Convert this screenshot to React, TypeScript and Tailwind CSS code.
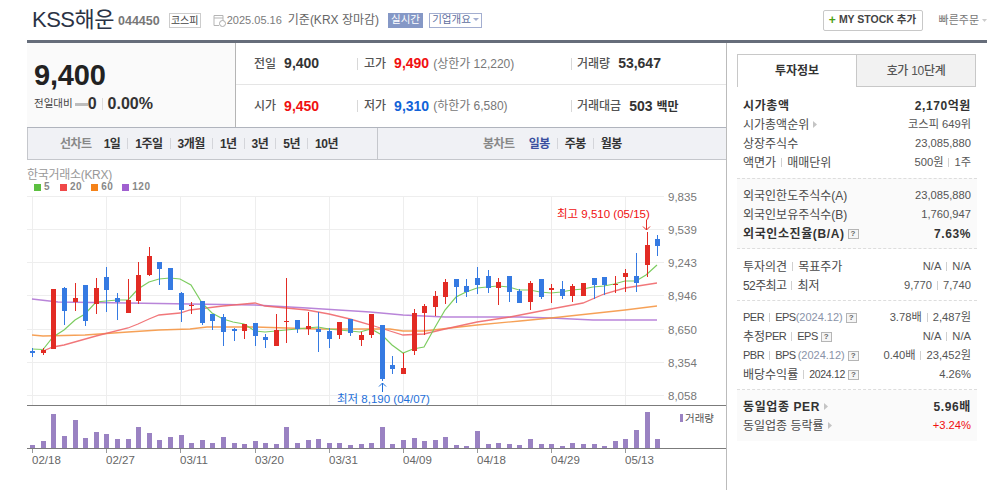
const candles: [string, number, number, number, number][] = [
  ['b', 348, 351, 353, 357], ['r', 348, 350, 353, 355], ['r', 289, 289, 349, 349], ['b', 287, 288, 311, 325],
  ['r', 283, 298, 302, 311], ['b', 285, 285, 321, 326], ['r', 278, 288, 304, 314], ['b', 267, 277, 290, 312],
  ['b', 293, 298, 302, 320], ['r', 279, 300, 313, 313], ['r', 262, 275, 301, 304], ['r', 247, 256, 275, 276],
  ['b', 262, 262, 269, 285], ['b', 268, 268, 290, 290], ['b', 292, 293, 310, 322], ['r', 302, 305, 306, 314],
  ['b', 301, 301, 323, 325], ['b', 314, 314, 321, 330], ['b', 314, 317, 332, 346], ['b', 328, 329, 331, 341],
  ['r', 324, 324, 331, 339], ['b', 323, 323, 336, 346], ['b', 334, 337, 340, 348], ['r', 314, 330, 346, 346],
  ['r', 278, 321, 322, 343], ['b', 320, 320, 329, 333], ['r', 312, 326, 329, 335], ['b', 312, 329, 332, 352],
  ['b', 328, 331, 339, 348], ['r', 322, 322, 335, 339], ['b', 319, 319, 333, 336], ['r', 332, 335, 340, 346],
  ['r', 314, 314, 335, 338], ['b', 325, 325, 379, 381], ['b', 356, 365, 369, 374], ['r', 353, 368, 374, 374],
  ['r', 309, 313, 351, 355], ['r', 304, 306, 313, 335], ['r', 291, 296, 307, 316], ['r', 279, 282, 297, 304],
  ['b', 279, 279, 287, 303], ['b', 279, 286, 292, 297], ['b', 267, 278, 285, 294], ['b', 270, 276, 288, 293],
  ['r', 278, 282, 288, 305], ['b', 276, 276, 292, 302], ['b', 289, 291, 303, 303], ['r', 281, 283, 302, 310],
  ['b', 279, 279, 297, 299], ['r', 284, 288, 290, 303], ['b', 281, 289, 296, 299], ['r', 284, 286, 296, 302],
  ['r', 283, 283, 296, 296], ['b', 278, 278, 285, 299], ['b', 277, 277, 285, 295], ['r', 276, 284, 285, 293],
  ['r', 269, 273, 277, 292], ['b', 253, 276, 283, 292], ['r', 232, 245, 265, 277], ['b', 235, 239, 246, 256],
];

// bar tops, read off the volume pane
const volumes = [
  445, 441, 414, 436, 420, 438, 432, 434, 439, 439, 427, 433, 440, 437, 435, 443, 440, 443, 437, 443,
  444, 441, 443, 444, 427, 443, 440, 439, 443, 443, 445, 444, 443, 427, 444, 440, 438, 441, 440, 437,
  445, 446, 431, 444, 443, 444, 445, 439, 444, 444, 446, 443, 444, 444, 446, 441, 439, 430, 412, 439,
];

const ma5 = '32,349 43,349.5 53,337 64,330 75,320 85,314 96,302 106,301 117,300 128,300 138,289 149,282 159,279 170,278 180,279 191,285 202,303 212,313 223,319 233,322 244,324 255,331 265,332 276,331 286,330 297,329 307,328 318,327 329,329 339,330 350,331 360,332 371,329 382,335 392,345 403,353 413,349 424,347 434,329 445,310 456,297 466,292 477,288 487,287 498,286 509,287 519,290 530,290 540,292 551,293 561,292 572,290 583,289 593,287 604,286 614,284 625,281 636,281 646,275 657,265';
const ma20 = '43,351 53,347 64,345 96,336 128,328 138,324 149,319 159,315 180,313 190,310 223,306 255,303 265,306 286,308 307,310 329,314 350,319 371,325 390,331 403,335 424,334 445,329 477,322 510,317 551,309 583,303 604,294 625,288 657,283';
const ma60 = '32,335 43,336 85,335 128,332 159,330 190,329 207,327 255,327 318,329 390,329 403,331 424,331 477,325 520,321 551,318 625,310 657,306';
const ma120 = '32,299 58,302 128,303 190,304 255,305 307,308 370,312 403,315 445,317 520,317 551,318 593,320 657,320';

const gridY = [
  [196.5, '9,835'], [229.5, '9,539'], [262.5, '9,243'], [295.5, '8,946'],
  [329.5, '8,650'], [362.5, '8,354'], [395.5, '8,058'],
] as const;
const ticks = [
  [32.5, '02/18'], [106.5, '02/27'], [180.5, '03/11'], [255.5, '03/20'], [329.5, '03/31'],
  [403.5, '04/09'], [477.5, '04/18'], [551.5, '04/29'], [625.5, '05/13'],
] as const;

function Caret() {
  return (
    <svg width="5" height="7" viewBox="0 0 5 7" className="ml-[4px] shrink-0">
      <path d="M0 0 L4 3.5 L0 7 Z" fill="#c4c4c4" />
    </svg>
  );
}

function Help() {
  return (
    <span className="ml-[3px] flex h-[10px] w-[11px] shrink-0 items-center justify-center border border-[#b5b5b5] bg-[#f5f5f5] text-[8px] leading-none font-bold tracking-normal text-[#666]">
      ?
    </span>
  );
}

function Sep() {
  return <span className="mx-[5px] h-[9px] w-px shrink-0 bg-[#d0d0d0]" />;
}

function Latin({ children }: { children: React.ReactNode }) {
  return <span className="text-[11px] tracking-[-0.5px]">{children}</span>;
}

function Row({ label, value, bold }: { label: React.ReactNode; value: React.ReactNode; bold?: boolean }) {
  return (
    <div className={`flex h-[19px] items-center justify-between ${bold ? 'font-bold tracking-[0.6px] text-[#333]' : 'text-[#4a4a4a]'}`}>
      <div className="flex items-center text-[12px] whitespace-nowrap">{label}</div>
      <div className={`flex items-center whitespace-nowrap ${bold ? 'text-[12px]' : 'text-[11.2px] text-[#555]'}`}>{value}</div>
    </div>
  );
}

function Stat({ label, value, color, extra, w }: { label: string; value: React.ReactNode; color: string; extra?: string; w: string }) {
  return (
    <div className={`flex items-center whitespace-nowrap ${w}`}>
      <span className="text-[12px] font-medium text-[#555]">{label}</span>
      <span className={`ml-[8px] text-[14px] font-bold ${color}`}>{value}</span>
      {extra && <span className="ml-[4px] text-[12px] text-[#777]">{extra}</span>}
    </div>
  );
}

function ToolItem({ text, last, active }: { text: string; last?: boolean; active?: boolean }) {
  return (
    <>
      <span className={`text-[12px] font-bold tracking-[-0.5px] ${active ? 'text-[#3a4f9f]' : 'text-[#333]'}`}>{text}</span>
      {!last && <span className="mx-[7px] h-[11px] w-px bg-[#d4d5da]" />}
    </>
  );
}

function Chart() {
  return (
    <svg width="699" height="298" viewBox="27 192 699 298" className="block" fontFamily="'Liberation Sans', 'Noto Sans CJK KR', sans-serif">
      {gridY.map(([y, t]) => (
        <g key={t}>
          <line x1="27" x2="664" y1={y} y2={y} stroke="#eeeeee" />
          <text x="668" y={y + 4} fontSize="11.5" fill="#777">{t}</text>
        </g>
      ))}
      {ticks.map(([x, t]) => (
        <g key={t}>
          <line x1={x} x2={x} y1="196" y2="405" stroke="#eeeeee" />
          <line x1={x} x2={x} y1="449" y2="453" stroke="#999" />
          <text x={x - 0.5} y="464" fontSize="11.5" fill="#666">{t}</text>
        </g>
      ))}

      <polyline points={ma120} fill="none" stroke="#a866d0" strokeWidth="1.3" opacity="0.8" />
      <polyline points={ma60} fill="none" stroke="#f5913a" strokeWidth="1.3" opacity="0.85" />
      <polyline points={ma20} fill="none" stroke="#f0686c" strokeWidth="1.3" opacity="0.9" />
      <polyline points={ma5} fill="none" stroke="#7dcc60" strokeWidth="1.2" />

      {candles.map(([c, high, top, bottom, low], i) => {
        const x = Math.round(32.3 + i * 10.59);
        const fill = c === 'r' ? '#e22b24' : '#357ae2';
        return (
          <g key={i} fill={fill}>
            <rect x={x} y={high} width="1" height={low - high} />
            <rect x={x - 2} y={top} width="5" height={bottom - top} />
          </g>
        );
      })}

      <text x="557" y="218" fontSize="11.5" fill="#f01010">최고 9,510 (05/15)</text>
      <path d="M646.5 220 V230 M643 226.5 L646.5 230 L650 226.5" fill="none" stroke="#e22b24" strokeWidth="1" />
      <text x="337" y="403" fontSize="11.5" fill="#1e6fd9">최저 8,190 (04/07)</text>
      <path d="M382.5 392 V383 M379 386.5 L382.5 383 L386 386.5" fill="none" stroke="#1e6fd9" strokeWidth="1" />

      <line x1="27" x2="726" y1="405.5" y2="405.5" stroke="#7b7b7b" />
      {volumes.map((top, i) => (
        <rect key={i} x={Math.round(32.3 + i * 10.59) - 2} y={top} width="5" height={448 - top} fill="#9a82c2" />
      ))}
      <line x1="27" x2="726" y1="448.5" y2="448.5" stroke="#7b7b7b" />
      <rect x="680" y="414" width="3" height="8" fill="#9a82c2" />
      <text x="685" y="422" fontSize="10.5" fill="#555">거래량</text>
    </svg>
  );
}

export default function App() {
  return (
    <div className="h-[490px] w-[996px] overflow-hidden bg-white font-['Liberation_Sans','Noto_Sans_CJK_KR',sans-serif] text-[#333]">
      {/* title bar */}
      <div className="ml-[27px] flex h-[43px] w-[960px] items-center border-b-[3px] border-[#666d7a] pl-[5px]">
        <h1 className="text-[22px] leading-none tracking-[-0.5px] text-[#2b3345]">KSS해운</h1>
        <span className="ml-[4px] mt-[3px] text-[12.5px] font-bold text-[#777]">044450</span>
        <span className="ml-[9px] flex h-[15px] w-[32px] items-center justify-center border border-[#ccc] text-[10px] text-[#444]">코스피</span>
        <svg width="13" height="13" viewBox="0 0 13 13" className="ml-[12px]">
          <path d="M1 1.5 H10 V7 M1 1.5 V11.5 H6 M1 4 H10" fill="none" stroke="#b5b5b5" />
          <circle cx="9.5" cy="9.5" r="3" fill="#fff" stroke="#aaa" />
        </svg>
        <span className="ml-[1px] text-[11px] text-[#7b7b7b]">2025.05.16</span>
        <span className="ml-[6px] text-[12px] text-[#666]">기준(KRX 장마감)</span>
        <span className="ml-[9px] flex h-[15px] w-[35px] items-center justify-center bg-[#8598c6] text-[10.5px] text-white">실시간</span>
        <span className="ml-[6px] flex h-[15px] w-[53px] items-center justify-center border border-[#a3aed0] text-[10.5px] text-[#5e6e9e]">
          기업개요
          <svg width="6" height="4" viewBox="0 0 6 4" className="ml-[2px]"><path d="M0 0 H6 L3 3 Z" fill="#a3aed0" /></svg>
        </span>
        <button className="ml-auto flex h-[21px] w-[100px] items-center justify-center rounded-[2px] border border-[#c8c8c8] text-[10.5px] font-bold text-[#444]">
          <span className="mr-[3px] text-[12px] leading-none text-[#4a9e12]">+</span>MY STOCK 추가
        </button>
        <span className="ml-[16px] text-[11px] text-[#777]">빠른주문</span>
        <svg width="5" height="3" viewBox="0 0 5 3" className="ml-[3px]"><path d="M0 0 H5 L2.5 3 Z" fill="#ccc" /></svg>
      </div>

      <div className="ml-[27px] flex h-[447px]">
        {/* left column */}
        <div className="h-full w-[700px] border-r border-[#bbb]">
          <div className="flex h-[85px] border-b border-[#b0b4bd]">
            <div className="h-full w-[209px] border-r border-[#b5b5b5] bg-[#fafafa] pl-[7px] pt-[14px]">
              <div className="text-[29px] leading-[36px] font-bold tracking-[-0.2px] text-[#222]">9,400</div>
              <div className="flex h-[22px] items-center">
                <span className="text-[10.5px] text-[#444]">전일대비</span>
                <span className="ml-[2px] h-[3px] w-[13px] bg-[#bdbdbd]" />
                <span className="text-[16px] font-bold text-[#333]">0</span>
                <span className="ml-[5px] mr-[5px] h-[12px] w-px bg-[#ddd]" />
                <span className="text-[16px] font-bold text-[#333]">0.00%</span>
              </div>
            </div>
            <div className="flex-1">
              <div className="flex h-[42px] items-center border-b border-[#e5e5e5] pl-[18px]">
                <Stat w="w-[103px]" label="전일" value="9,400" color="text-[#333]" />
                <span className="mr-[6px] h-[12px] w-px bg-[#d8d8d8]" />
                <Stat w="w-[207px]" label="고가" value="9,490" color="text-[#f01010]" extra="(상한가 12,220)" />
                <span className="mr-[5px] h-[12px] w-px bg-[#d8d8d8]" />
                <Stat w="w-[100px]" label="거래량" value="53,647" color="text-[#333]" />
              </div>
              <div className="flex h-[42px] items-center pl-[18px]">
                <Stat w="w-[103px]" label="시가" value="9,450" color="text-[#f01010]" />
                <span className="mr-[6px] h-[12px] w-px bg-[#d8d8d8]" />
                <Stat w="w-[207px]" label="저가" value="9,310" color="text-[#1263d8]" extra="(하한가 6,580)" />
                <span className="mr-[5px] h-[12px] w-px bg-[#d8d8d8]" />
                <Stat w="w-[100px]" label="거래대금" value={<>503 <span className="text-[12px]">백만</span></>} color="text-[#333]" />
              </div>
            </div>
          </div>

          <div className="flex h-[32px] items-center border-b border-l border-[#c5c7cc] bg-[#f0f1f5]">
            <div className="flex h-full w-[350px] items-center border-r border-[#c5c7cc] pl-[32px]">
              <span className="mr-[12px] text-[12px] font-bold tracking-[-0.5px] text-[#888]">선차트</span>
              <ToolItem text="1일" />
              <ToolItem text="1주일" />
              <ToolItem text="3개월" />
              <ToolItem text="1년" />
              <ToolItem text="3년" />
              <ToolItem text="5년" />
              <ToolItem text="10년" last />
            </div>
            <div className="flex items-center pl-[105px]">
              <span className="mr-[14px] text-[12px] font-bold tracking-[-0.5px] text-[#888]">봉차트</span>
              <ToolItem text="일봉" active />
              <ToolItem text="주봉" />
              <ToolItem text="월봉" last />
            </div>
          </div>

          <div className="h-[32px] pt-[9px]">
            <div className="text-[12px] leading-[13px] tracking-[-0.3px] text-[#999]">한국거래소(KRX)</div>
            <div className="ml-[7px] flex items-center text-[10px] leading-[10px] font-bold tracking-[0.5px] text-[#888]">
              <span className="mr-[3px] h-[7px] w-[7px] bg-[#5cc040]" /><span className="mr-[10px]">5</span>
              <span className="mr-[3px] h-[7px] w-[7px] bg-[#f04848]" /><span className="mr-[9px]">20</span>
              <span className="mr-[3px] h-[7px] w-[7px] bg-[#f58218]" /><span className="mr-[9px]">60</span>
              <span className="mr-[3px] h-[7px] w-[7px] bg-[#a060d0]" /><span>120</span>
            </div>
          </div>
          <Chart />
        </div>

        {/* right column */}
        <div className="ml-[10px] w-[240px]">
          <div className="mt-[11px] flex h-[33px] w-[239px] text-[12px]">
            <div className="flex w-[119px] items-center justify-center border-l border-t border-[#c8c8c8] font-bold text-[#333]">투자정보</div>
            <div className="flex flex-1 items-center justify-center border border-[#c8c8c8] bg-[#f2f2f2] font-medium tracking-[-0.3px] text-[#555]">호가 10단계</div>
          </div>
          <div className="px-[6px] pb-[6px] pt-[9px]">
            <Row bold label="시가총액" value="2,170억원" />
            <Row label={<>시가총액순위<Caret /></>} value="코스피 649위" />
            <Row label="상장주식수" value="23,085,880" />
            <Row label={<>액면가<Sep />매매단위</>} value={<>500원<Sep />1주</>} />
          </div>
          <div className="border-y border-dashed border-[#ddd] bg-[#fafafa] px-[6px] pb-[5px] pt-[7px]">
            <Row label="외국인한도주식수(A)" value="23,085,880" />
            <Row label="외국인보유주식수(B)" value="1,760,947" />
            <Row bold label={<>외국인소진율(B/A)<Help /></>} value="7.63%" />
          </div>
          <div className="border-b border-dashed border-[#ddd] px-[6px] pb-[5px] pt-[8px]">
            <Row label={<>투자의견<Sep />목표주가</>} value={<>N/A<Sep />N/A</>} />
            <Row label={<><span className="tracking-[-0.6px]">52주최고</span><Sep />최저</>} value={<>9,770<Sep />7,740</>} />
          </div>
          <div className="border-b border-dashed border-[#ddd] px-[6px] pb-[5px] pt-[7px]">
            <Row label={<><Latin>PER</Latin><Sep /><Latin>EPS</Latin><span className="text-[11px] text-[#8a93a8]">(2024.12)</span><Help /></>} value={<>3.78배<Sep />2,487원</>} />
            <Row label={<>추정<Latin>PER</Latin><Sep /><Latin>EPS</Latin><Help /></>} value={<>N/A<Sep />N/A</>} />
            <Row label={<><Latin>PBR</Latin><Sep /><Latin>BPS</Latin><span className="ml-[2px] text-[11px] text-[#8a93a8]">(2024.12)</span><Help /></>} value={<>0.40배<Sep />23,452원</>} />
            <Row label={<>배당수익률<Sep /><span className="text-[10.5px] tracking-[-0.3px]">2024.12</span><Help /></>} value="4.26%" />
          </div>
          <div className="bg-[#fafafa] px-[6px] pb-[6px] pt-[7px]">
            <Row bold label={<>동일업종 PER<Caret /></>} value="5.96배" />
            <Row label={<>동일업종 등락률<Caret /></>} value={<span className="text-[#f01010]">+3.24%</span>} />
          </div>
        </div>
      </div>
    </div>
  );
}
